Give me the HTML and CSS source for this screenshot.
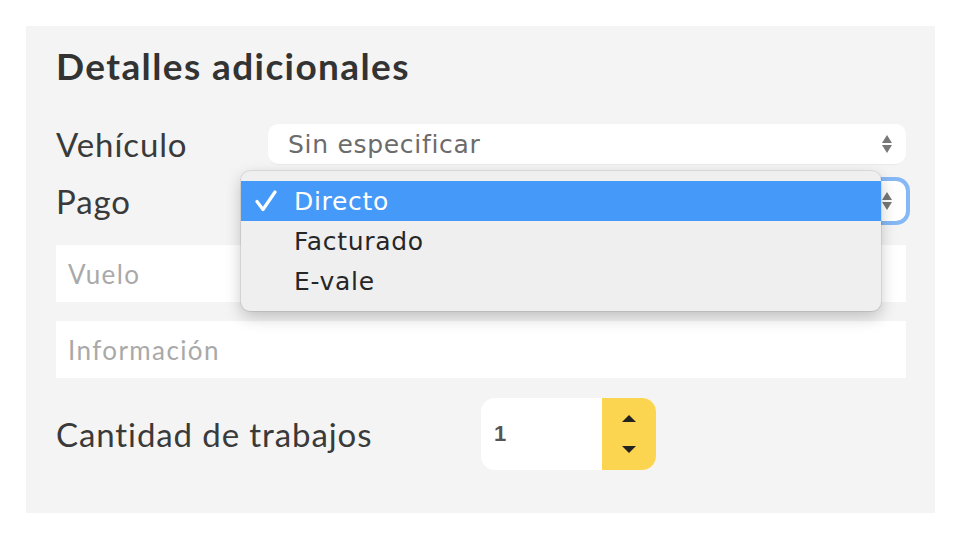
FILE: index.html
```html
<!DOCTYPE html>
<html lang="es">
<head>
<meta charset="utf-8">
<title>Detalles adicionales</title>
<link rel="stylesheet" href="styles.css">
</head>
<body>
<div class="panel">
  <h2 class="title">Detalles adicionales</h2>
  <div class="row row-vehiculo">
    <span class="label">Vehículo</span>
    <div class="select">
      <span class="select-text">Sin especificar</span>
      <span class="arrows"><span class="up"></span><span class="down"></span></span>
    </div>
  </div>
  <div class="row row-pago">
    <span class="label">Pago</span>
    <div class="select focused">
      <span class="select-text"></span>
      <span class="arrows"><span class="up"></span><span class="down"></span></span>
    </div>
  </div>
  <div class="input input-vuelo"><span class="placeholder">Vuelo</span></div>
  <div class="input input-info"><span class="placeholder">Información</span></div>
  <div class="row row-cantidad">
    <span class="label label-wide">Cantidad de trabajos</span>
    <div class="number">
      <span class="number-value">1</span>
      <div class="spinner"><span class="sp-up"></span><span class="sp-down"></span></div>
    </div>
  </div>

  <ul class="menu">
    <li class="item selected">
      <span class="check"><svg width="22" height="22" viewBox="0 0 22 22"><path d="M2 11.5 L8 19.5 L20 2" fill="none" stroke="#ffffff" stroke-width="3.2" stroke-linecap="round" stroke-linejoin="round"/></svg></span>Directo
    </li>
    <li class="item"><span class="check"></span>Facturado</li>
    <li class="item"><span class="check"></span>E-vale</li>
  </ul>
</div>
</body>
</html>
```

FILE: styles.css
```css
* { box-sizing: border-box; }
html, body { margin: 0; padding: 0; background: #ffffff; }
body { width: 970px; height: 536px; overflow: hidden; }

.panel {
  position: relative;
  margin: 26px 0 0 26px;
  width: 909px;
  height: 487px;
  background: #f4f4f4;
  padding: 0 29px 0 30px;
  font-family: Lato, "Open Sans", sans-serif;
  color: #3a3a3a;
}

.title {
  margin: 0;
  padding-top: 20px;
  height: 98px;
  font-size: 37px;
  line-height: 40px;
  font-weight: 700;
  color: #333333;
  letter-spacing: 1.4px;
}

.row { display: flex; align-items: center; }
.row-pago { margin-top: 17px; }
.row-cantidad { margin-top: 20px; }

.label {
  width: 212px;
  flex: none;
  font-size: 33px;
  line-height: 40px;
  letter-spacing: 0.9px;
  color: #3a3a3a;
}
.label-wide { width: 425px; }

.select {
  flex: 1;
  height: 40px;
  background: #ffffff;
  border-radius: 10px;
  display: flex;
  align-items: center;
  justify-content: space-between;
  padding: 0 14px 0 20px;
  box-shadow: 0 1px 1px rgba(0,0,0,0.04);
}
.select.focused {
  box-shadow: 0 0 0 4px rgba(96, 164, 245, 0.75);
}
.select-text {
  font-family: "DejaVu Sans", "Liberation Sans", sans-serif;
  font-size: 25px;
  color: #6c6c6c;
  letter-spacing: 0.7px;
}
.arrows { display: flex; flex-direction: column; gap: 2px; }
.up, .down { width: 0; height: 0; border-left: 5px solid transparent; border-right: 5px solid transparent; }
.up { border-bottom: 8px solid #777777; }
.down { border-top: 8px solid #777777; }

.input {
  height: 57px;
  background: #ffffff;
  display: flex;
  align-items: center;
  padding-left: 12px;
}
.input-vuelo { margin-top: 24px; }
.input-info { margin-top: 19px; }
.placeholder {
  font-size: 26px;
  letter-spacing: 1.4px;
  color: #a9a9a9;
}

.number {
  width: 175px;
  height: 72px;
  display: flex;
  border-radius: 14px;
  overflow: hidden;
  background: #ffffff;
}
.number-value {
  flex: 1;
  display: flex;
  align-items: center;
  padding-left: 13px;
  font-family: "Liberation Sans", Arial, sans-serif;
  font-size: 22px;
  font-weight: 700;
  color: #555555;
}
.spinner {
  width: 54px;
  background: #fcd550;
  display: flex;
  flex-direction: column;
  align-items: center;
  justify-content: space-between;
  padding: 17px 0 17px;
}
.sp-up, .sp-down { width: 0; height: 0; border-left: 7px solid transparent; border-right: 7px solid transparent; }
.sp-up { border-bottom: 7px solid #222222; }
.sp-down { border-top: 7px solid #222222; }

.menu {
  position: absolute;
  left: 215px;
  top: 145px;
  width: 640px;
  margin: 0;
  padding: 10px 0;
  list-style: none;
  background: #efefef;
  border-radius: 9px;
  box-shadow: 0 0 0 1px rgba(0,0,0,0.08), 0 6px 16px rgba(0,0,0,0.22);
  font-family: "DejaVu Sans", "Liberation Sans", sans-serif;
  font-size: 25px;
  color: #262626;
}
.item {
  height: 40px;
  display: flex;
  align-items: center;
  padding-left: 14px;
  letter-spacing: 0.7px;
}
.item.selected { background: #4599f8; color: #ffffff; }
.check {
  width: 39px;
  flex: none;
  display: flex;
  align-items: center;
}
.check svg { display: block; }
```
